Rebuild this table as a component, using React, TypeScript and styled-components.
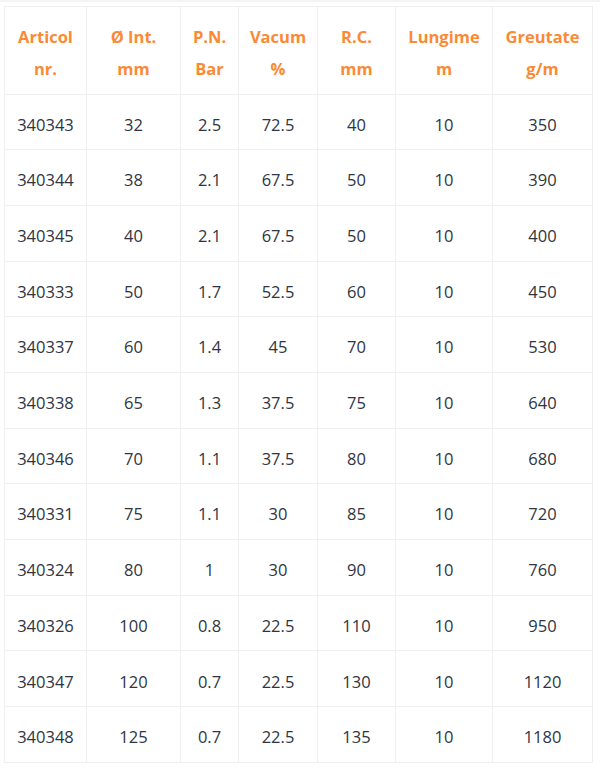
import React from "react";
import styled, { createGlobalStyle } from "styled-components";

const Global = createGlobalStyle`
  html, body { margin: 0; padding: 0; background: #fff; }
  body { font-family: "Open Sans", "DejaVu Sans", sans-serif; }
`;

const Page = styled.div`
  border-top: 2px solid #f4f4f4;
  padding: 4px 0 0 4px;
`;

const Table = styled.table`
  border-collapse: collapse;
  table-layout: fixed;
  width: 589px;
  border: 1px solid #efefef;
`;

const Th = styled.th`
  border: 1px solid #efefef;
  color: #fb8a35;
  font-weight: 700;
  font-size: 16.5px;
  line-height: 32.3px;
  padding: 14px 2px 8px;
  text-align: center;
  vertical-align: middle;
`;

const Td = styled.td`
  border: 1px solid #efefef;
  color: #2f3542;
  font-size: 16.5px;
  line-height: 32.3px;
  padding: 14.2px 2px 8.2px;
  text-align: center;
  vertical-align: middle;
`;

const widths = [82, 94, 58, 79, 78, 97, 100];

const headers: [string, string][] = [
  ["Articol", "nr."],
  ["Ø Int.", "mm"],
  ["P.N.", "Bar"],
  ["Vacum", "%"],
  ["R.C.", "mm"],
  ["Lungime", "m"],
  ["Greutate", "g/m"],
];

const rows: string[][] = [
  ["340343", "32", "2.5", "72.5", "40", "10", "350"],
  ["340344", "38", "2.1", "67.5", "50", "10", "390"],
  ["340345", "40", "2.1", "67.5", "50", "10", "400"],
  ["340333", "50", "1.7", "52.5", "60", "10", "450"],
  ["340337", "60", "1.4", "45", "70", "10", "530"],
  ["340338", "65", "1.3", "37.5", "75", "10", "640"],
  ["340346", "70", "1.1", "37.5", "80", "10", "680"],
  ["340331", "75", "1.1", "30", "85", "10", "720"],
  ["340324", "80", "1", "30", "90", "10", "760"],
  ["340326", "100", "0.8", "22.5", "110", "10", "950"],
  ["340347", "120", "0.7", "22.5", "130", "10", "1120"],
  ["340348", "125", "0.7", "22.5", "135", "10", "1180"],
];

export default function App() {
  return (
    <>
      <Global />
      <Page>
        <Table>
          <colgroup>
            {widths.map((w, i) => (
              <col key={i} style={{ width: w }} />
            ))}
          </colgroup>
          <thead>
            <tr>
              {headers.map(([a, b]) => (
                <Th key={a}>
                  {a}
                  <br />
                  {b}
                </Th>
              ))}
            </tr>
          </thead>
          <tbody>
            {rows.map((r) => (
              <tr key={r[0]}>
                {r.map((c, i) => (
                  <Td key={i}>{c}</Td>
                ))}
              </tr>
            ))}
          </tbody>
        </Table>
      </Page>
    </>
  );
}
